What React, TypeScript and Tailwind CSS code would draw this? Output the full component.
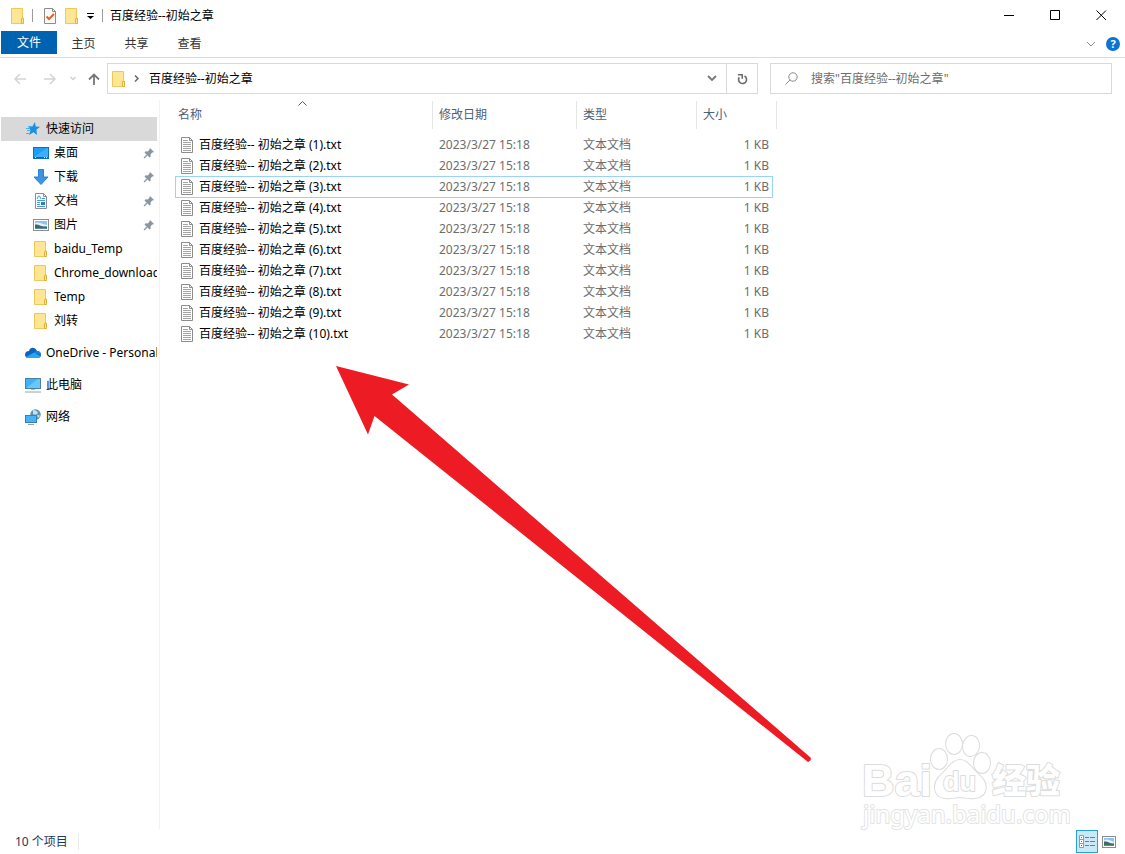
import type { ReactNode } from "react";

const files = [1, 2, 3, 4, 5, 6, 7, 8, 9, 10];

function Folder() {
    return (
        <svg width="16" height="16" viewBox="0 0 16 16" className="shrink-0">
            <path d="M1.5.5h11v9.5h1v5.5h-12z" fill="#ffe694" stroke="#eec85a" />
            <path d="M11.500 15.500v-5h2v5z" fill="#ffe694" stroke="#e3b43c" />
        </svg>
    );
}

function TextFile() {
    return (
        <svg width="12" height="16" viewBox="0 0 12 16" className="shrink-0">
            <path d="M.5.500h8l3 3v12H.5z" fill="#fff" stroke="#8c8c8c" />
            <path d="M8.500.500v3h3" fill="none" stroke="#8c8c8c" />
            <path d="M2 3.500h5M2 5.500h8M2 7.500h8M2 9.500h8M2 11.500h8M2 13.500h8" stroke="#a5a5a5" />
        </svg>
    );
}

function Pin() {
    return (
        <svg width="12" height="12" viewBox="0 0 12 12" className="shrink-0">
            <path d="M7 1l4 4-1.200.6-.6-.2L7.500 7.500l.2 2L6.500 10.500 1.500 5.500l1-1.200 2.200.2L6.600 2.600 6.400 2z" fill="#8996a0" />
            <path d="M4 8L1 11.200" stroke="#8996a0" strokeWidth="1.200" />
        </svg>
    );
}

function Picture({ width = 16 }: { width?: number }) {
    return (
        <svg width={width} height="12" viewBox={`0 0 ${width} 12`} className="shrink-0">
            <rect x=".5" y=".5" width={width - 1} height="11" fill="#fff" stroke="#8c8c8c" />
            <rect x="2" y="2" width={width - 4} height="8" fill="#8fc1f5" />
            <path d={`M2 4.500q2-1.500 5-.5t${width - 9} 2v1H2z`} fill="#e8f3fb" />
            <path d={`M2 5.500q3-.5 5 1t${width - 9} 1v2H2z`} fill="#3e6b64" />
            <path d={`M2 9h${width - 4}v1H2z`} fill="#5b86ad" />
        </svg>
    );
}

const icons: Record<string, ReactNode> = {
    star: (
        <svg width="14" height="14" viewBox="0 0 14 14">
            <path d="M9 0l.6 4.500 4.400.2-3.600 3 .6 5.300-3.500-2.700L3 13l1.500-4.700L2.500 5.500l3.700-.8z" fill="#1b8fdf" />
            <path d="M0 6.500h4M1 8.500h4M0 11.500h4M2 4.500h4" stroke="#49b1ef" />
        </svg>
    ),
    desktop: (
        <svg width="16" height="12" viewBox="0 0 16 12">
            <rect x=".5" y=".5" width="15" height="11" fill="#1e9dfb" stroke="#0f6fc0" />
            <path d="M1 10L14 1h1v9z" fill="#3bb0ff" />
            <path d="M1 10.500h14" stroke="#0b66b3" />
            <path d="M2 10.500h1M11 10.500h1M13 10.500h1" stroke="#fff" />
        </svg>
    ),
    download: (
        <svg width="16" height="16" viewBox="0 0 16 16">
            <path d="M5.500.500h5v7.500h4.500L8 15.500 1 8h4.500z" fill="#3a96e4" stroke="#2b80cb" />
        </svg>
    ),
    document: (
        <svg width="12" height="16" viewBox="0 0 12 16">
            <path d="M.5.500h8l3 3v12H.5z" fill="#fff" stroke="#8c8c8c" />
            <path d="M8.500.500v3h3" fill="none" stroke="#8c8c8c" />
            <path d="M2 6l1.500-3h1L6 6M7 5.500h3M2 7.500h8M2 9.500h3M2 11.500h3M2 13.500h8" fill="none" stroke="#3f9be0" />
            <path d="M6 9h4v3H6z" fill="#2f7eb8" />
        </svg>
    ),
    picture: <Picture />,
    folder: <Folder />,
    cloud: (
        <svg width="16" height="12" viewBox="0 0 16 12">
            <path d="M4 4C5 0 10-.5 12 4c2.500 0 4 1.500 4 3.700S14.500 11 12.500 11H3.500C1.500 11 0 9.700 0 7.700S1.500 4 4 4z" fill="#0f63bd" />
            <path d="M12 4c2.500 0 4 1.500 4 3.700l-7-2C9.800 4.500 10.700 4 12 4z" fill="#1683dc" />
            <path d="M1 10l8-4.500 6.700 3.700C15 10.500 14 11 12.500 11h-9C2.500 11 1.600 10.600 1 10z" fill="#27a7ef" />
        </svg>
    ),
    computer: (
        <svg width="16" height="16" viewBox="0 0 16 16">
            <rect x=".5" y="1.500" width="15" height="10" fill="#3fb2fa" stroke="#4e7f9d" />
            <path d="M1 11L13 2h2v9z" fill="#66c8ff" />
            <path d="M6 12.500h4" stroke="#a9bac5" />
            <path d="M0 15h16" stroke="#8fa4b2" />
        </svg>
    ),
    network: (
        <svg width="16" height="16" viewBox="0 0 16 16">
            <circle cx="10.500" cy="5.500" r="5.200" fill="#5f93b0" />
            <path d="M8 1q4 0 5 3-2 3-5 1zM12 6q3 0 3 1l-2 2z" fill="#c6e0ec" />
            <rect x=".5" y="6.500" width="11" height="7" fill="#43b4fa" stroke="#3f7ea5" />
            <path d="M3 15.500h6" stroke="#8fa4b2" />
        </svg>
    ),
};

type NavProps = {
    icon: string;
    title: string;
    nested?: boolean;
    pinned?: boolean;
    active?: boolean;
};

function NavItem({ icon, title, nested, pinned, active }: NavProps) {
    return (
        <a href="#" className={`flex h-6 w-full items-center gap-[5px] ${nested ? "pl-8" : "pl-6"} ${active ? "bg-[#d9d9d9]" : ""}`}>
            <span className="flex w-4 shrink-0 justify-center">{icons[icon]}</span>
            <span className="flex-1 overflow-hidden whitespace-nowrap">{title}</span>
            {pinned && <span className="pr-[2px]"><Pin /></span>}
        </a>
    );
}

function TitleBar() {
    return (
        <header className="flex h-[31px] items-center pr-px pl-[10px]">
            <Folder />
            <span className="ml-[6px] h-[13px] w-px bg-[#9b9b9b]" />
            <button aria-label="属性" className="ml-[11px]">
                <svg width="12" height="16" viewBox="0 0 12 16">
                    <path d="M.5.500h8l3 3v12H.5z" fill="#fafafa" stroke="#8c8c8c" />
                    <path d="M8.500.500v3h3" fill="none" stroke="#8c8c8c" />
                    <path d="M2.500 8.500L5 11l5-5" fill="none" stroke="#e8602c" strokeWidth="2" />
                </svg>
            </button>
            <button aria-label="新建文件夹" className="ml-2"><Folder /></button>
            <button aria-label="自定义" className="ml-[7px]">
                <svg width="7" height="6" viewBox="0 0 7 6"><path d="M0 0h7v1H0zM0 3h7L3.500 6z" /></svg>
            </button>
            <span className="ml-2 h-[13px] w-px bg-[#9b9b9b]" />
            <h1 className="ml-[7px] flex-1">百度经验--初始之章</h1>
            <button aria-label="最小化" className="flex h-full w-[46px] items-center justify-center">
                <svg width="11" height="11" viewBox="0 0 11 11"><path d="M0 5.500h10" stroke="#000" /></svg>
            </button>
            <button aria-label="最大化" className="flex h-full w-[46px] items-center justify-center">
                <svg width="11" height="11" viewBox="0 0 11 11"><path d="M.5.500h9v9h-9z" fill="none" stroke="#000" /></svg>
            </button>
            <button aria-label="关闭" className="flex h-full w-[46px] items-center justify-center">
                <svg width="11" height="11" viewBox="0 0 11 11"><path d="M.5.500l9.500 9.500M10 .5L.5 10" stroke="#000" /></svg>
            </button>
        </header>
    );
}

function Ribbon() {
    return (
        <nav className="flex h-[27px] border-b border-[#dadbdc] pl-px text-[#333]">
            <button className="h-[23px] w-14 bg-[#0063b1] text-white">文件</button>
            <button className="h-[25px] w-[53px]">主页</button>
            <button className="h-[25px] w-[53px]">共享</button>
            <button className="h-[25px] w-[53px]">查看</button>
            <div className="flex flex-1 items-center justify-end gap-[10px] pr-[5px]">
                <button aria-label="展开功能区">
                    <svg width="10" height="6" viewBox="0 0 10 6"><path d="M1 1l4 4 4-4" fill="none" stroke="#8a8a8a" /></svg>
                </button>
                <button aria-label="帮助" className="h-[14px] w-[14px] rounded-full bg-[#0a74d6] text-[11px] leading-[14px] font-bold text-white">?</button>
            </div>
        </nav>
    );
}

function AddressBar() {
    return (
        <div className="flex h-[42px] items-center pr-[13px] pb-px">
            <div className="flex w-[107px] items-center">
                <button aria-label="返回" className="ml-[14px]">
                    <svg width="12" height="12" viewBox="0 0 12 12"><path d="M12 6H1M6 1L1 6l5 5" fill="none" stroke="#d4d4d4" strokeWidth="1.500" /></svg>
                </button>
                <button aria-label="前进" className="ml-[18px]">
                    <svg width="12" height="12" viewBox="0 0 12 12"><path d="M0 6h11M6 1l5 5-5 5" fill="none" stroke="#d4d4d4" strokeWidth="1.500" /></svg>
                </button>
                <button aria-label="最近位置" className="ml-[14px]">
                    <svg width="6" height="5" viewBox="0 0 6 5"><path d="M.5 1L3 3.500 5.500 1" fill="none" stroke="#cfcfcf" strokeWidth="1.300" /></svg>
                </button>
                <button aria-label="向上" className="ml-3">
                    <svg width="12" height="12" viewBox="0 0 12 12"><path d="M6 12V1.500M1 6.500l5-5 5 5" fill="none" stroke="#777" strokeWidth="1.800" /></svg>
                </button>
            </div>
            <div className="flex h-[31px] flex-1 items-center border border-[#d9d9d9] pl-[3px]">
                <Folder />
                <svg width="5" height="7" viewBox="0 0 5 7" className="ml-[7px]"><path d="M1 .5l3 3-3 3" fill="none" stroke="#666" strokeWidth="1.500" /></svg>
                <a href="#" className="ml-[10px] flex-1">百度经验--初始之章</a>
                <button aria-label="以前的位置" className="mr-[9px]">
                    <svg width="10" height="7" viewBox="0 0 10 7"><path d="M1 1l4 4 4-4" fill="none" stroke="#777" strokeWidth="1.800" /></svg>
                </button>
                <button aria-label="刷新" className="flex h-full w-[31px] items-center justify-center border-l border-[#d9d9d9]">
                    <svg width="11" height="12" viewBox="0 0 11 12">
                        <path d="M7.500 3A4 4 0 1 1 2.300 4.200" fill="none" stroke="#6b6b6b" strokeWidth="1.600" />
                        <path d="M1 1.700h4.200v4" fill="none" stroke="#6b6b6b" strokeWidth="1.500" />
                    </svg>
                </button>
            </div>
            <label className="ml-3 flex h-[31px] w-[342px] items-center border border-[#d9d9d9] pl-[14px]">
                <svg width="13" height="13" viewBox="0 0 13 13"><circle cx="8" cy="5" r="4.200" fill="none" stroke="#8a8a8a" /><path d="M5 8L.5 12.500" stroke="#8a8a8a" /></svg>
                <input aria-label="搜索" placeholder={'搜索"百度经验--初始之章"'} className="ml-[13px] flex-1 outline-none placeholder:text-[#6d6d6d]" />
            </label>
        </div>
    );
}

function Sidebar() {
    return (
        <aside className="w-40 shrink-0 border-r border-[#f2f2f2] pt-[17px] pr-[2px] pl-px">
            <NavItem icon="star" title="快速访问" active />
            <NavItem icon="desktop" title="桌面" nested pinned />
            <NavItem icon="download" title="下载" nested pinned />
            <NavItem icon="document" title="文档" nested pinned />
            <NavItem icon="picture" title="图片" nested pinned />
            <NavItem icon="folder" title="baidu_Temp" nested />
            <NavItem icon="folder" title="Chrome_download" nested />
            <NavItem icon="folder" title="Temp" nested />
            <NavItem icon="folder" title="刘转" nested />
            <div className="flex flex-col gap-2 pt-2">
                <NavItem icon="cloud" title="OneDrive - Personal" />
                <NavItem icon="computer" title="此电脑" />
                <NavItem icon="network" title="网络" />
            </div>
        </aside>
    );
}

function FileTable() {
    const head = "relative h-[33px] p-0 text-left align-top font-normal";
    const label = "flex h-7 items-center border-r border-[#e5e5e5]";
    return (
        <table className="w-[602px] table-fixed border-collapse text-[#6d6d6d]">
            <thead className="text-[#4c607a]">
                <tr>
                    <th className={`${head} w-[258px]`}>
                        <svg width="9" height="5" viewBox="0 0 9 5" className="absolute top-0 left-[123px]"><path d="M.5 4.500l4-4 4 4" fill="none" stroke="#555" /></svg>
                        <div className={`${label} pl-[3px]`}>名称</div>
                    </th>
                    <th className={`${head} w-[144px]`}><div className={`${label} pl-[6px]`}>修改日期</div></th>
                    <th className={`${head} w-[120px]`}><div className={`${label} pl-[6px]`}>类型</div></th>
                    <th className={`${head} w-20`}><div className={`${label} pl-[6px]`}>大小</div></th>
                </tr>
            </thead>
            <tbody>
                {files.map((n) => (
                    <tr key={n} className={n == 3 ? "relative after:absolute after:top-0 after:right-1 after:-bottom-px after:left-0 after:border after:border-[#99d1ff]" : ""}>
                        <td className="h-[21px] p-0 pl-[6px] text-black">
                            <div className="flex items-center gap-[6px]">
                                <TextFile />
                                <span>百度经验-- 初始之章 ({n}).txt</span>
                            </div>
                        </td>
                        <td className="p-0 pl-[6px]">2023/3/27 15:18</td>
                        <td className="p-0 pl-[6px]">文本文档</td>
                        <td className="p-0 pr-2 text-right">1 KB</td>
                    </tr>
                ))}
            </tbody>
        </table>
    );
}

function RedArrow() {
    return (
        <svg width="480" height="400" viewBox="336 366 480 400" className="pointer-events-none absolute top-[266px] left-[176px]">
            <path d="M336 366L409 384.500 392 394.500 810.500 757.500q1.500 3-2.500 4.500L374.500 416 368 434.500z" fill="#ed1c24" />
        </svg>
    );
}

function Watermark() {
    return (
        <svg width="210" height="104" viewBox="0 0 210 104" className="pointer-events-none absolute right-[55px] -bottom-[4px] [paint-order:stroke]" fill="#fff" stroke="#dcdcdc" strokeWidth="2" strokeLinejoin="round">
            <text x="2" y="67" fontSize="45" fontWeight="700" fontFamily="Liberation Sans">Bai</text>
            <ellipse cx="79" cy="30" rx="8" ry="10" />
            <ellipse cx="94" cy="15" rx="8" ry="10" />
            <ellipse cx="111" cy="17" rx="8" ry="10" transform="rotate(8 111 17)" />
            <ellipse cx="122" cy="34" rx="8" ry="10" />
            <path d="M100 31c8 0 12 9 19 15 10 8 9 22-4 23-6 1-10-1-15-1s-9 2-15 1c-12-1-13-15-4-23 7-6 11-15 19-15z" />
            <text x="83" y="62" fontSize="27" fontWeight="700" fontFamily="Liberation Sans">du</text>
            <text x="132" y="64" fontSize="34" fontWeight="900" fontFamily="Noto Sans CJK SC">经验</text>
            <text x="3" y="94" fontSize="24" fontFamily="Noto Sans" stroke="#e4e4e4">jingyan.baidu.com</text>
        </svg>
    );
}

function StatusBar() {
    return (
        <footer className="flex h-[25px] items-center text-[#1e395b]">
            <span className="border-r border-[#ebebeb] pr-[10px] pl-[15px]">10 个项目</span>
            <div className="ml-auto flex items-center gap-1 pr-[9px]">
                <button aria-label="详细信息" className="flex h-[23px] w-[22px] items-center justify-center border border-[#26a0da] bg-[#cbe8f6]">
                    <svg width="16" height="13" viewBox="0 0 16 13">
                        <path d="M.5.500h4v12h-4zM.5 4.500h4M.5 8.500h4" fill="#fff" stroke="#999" />
                        <path d="M6 2.500h4M11 2.500h5M6 6.500h4M11 6.500h5M6 10.500h4M11 10.500h5" stroke="#7b7b7b" />
                        <path d="M2 2.500h1M2 6.500h1" stroke="#4a7ab5" />
                        <path d="M2 10.500h1" stroke="#d02020" />
                    </svg>
                </button>
                <button aria-label="大缩略图"><Picture width={14} /></button>
            </div>
        </footer>
    );
}

export default function App() {
    return (
        <div className="flex min-h-screen flex-col bg-white font-['Noto_Sans','Noto_Sans_CJK_SC',sans-serif] text-[12px] leading-4 text-black">
            <TitleBar />
            <Ribbon />
            <AddressBar />
            <div className="flex flex-1">
                <Sidebar />
                <main className="relative flex-1 pt-px pl-[15px]">
                    <FileTable />
                    <RedArrow />
                    <Watermark />
                </main>
            </div>
            <StatusBar />
        </div>
    );
}
